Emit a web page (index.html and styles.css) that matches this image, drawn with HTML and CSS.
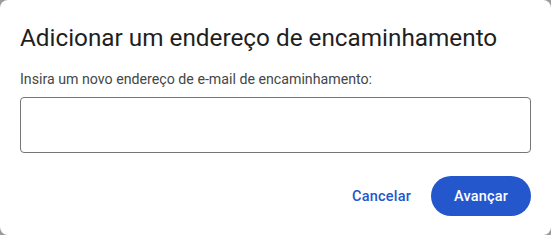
FILE: index.html
```html
<!DOCTYPE html>
<html lang="pt-BR">
<head>
    <meta charset="UTF-8">
    <meta name="viewport" content="width=device-width, initial-scale=1.0">
    <title>Adicionar um endereço de encaminhamento</title>
    <link rel="stylesheet" href="styles.css">
</head>
<body>
    <div class="dialog">
        <h1 class="dialog-title">Adicionar um endereço de encaminhamento</h1>
        <label class="field-label" for="forwardEmail">Insira um novo endereço de e-mail de encaminhamento:</label>
        <input type="text" id="forwardEmail" class="field-input">
        <div class="dialog-actions">
            <button class="btn-text">Cancelar</button>
            <button class="btn-filled">Avançar</button>
        </div>
    </div>
</body>
</html>
```

FILE: styles.css
```css
body {
    margin: 0;
    background-color: #9b9b9b;
    font-family: Roboto, Arial, sans-serif;
}

.dialog {
    box-sizing: border-box;
    width: 551px;
    height: 235px;
    background-color: white;
    border-radius: 8px;
    padding: 22px 20px 0 20px;
}

.dialog-title {
    margin: 0;
    font-size: 24.3px;
    font-weight: 400;
    color: #1f1f1f;
    line-height: 32px;
}

.field-label {
    display: block;
    margin-top: 15px;
    font-size: 14.2px;
    color: #444746;
    line-height: 20px;
}

.field-input {
    box-sizing: border-box;
    display: block;
    width: 100%;
    height: 56px;
    margin-top: 8px;
    border: 1px solid #747775;
    border-radius: 4px;
    font-size: 16px;
    padding: 0 12px;
}

.dialog-actions {
    display: flex;
    justify-content: flex-end;
    align-items: center;
    gap: 8px;
    margin-top: 23px;
}

button {
    font-family: Roboto, Arial, sans-serif;
    font-size: 14.5px;
    font-weight: 500;
    letter-spacing: 0.2px;
    border: none;
    height: 40px;
    border-radius: 20px;
    cursor: pointer;
}

.btn-text {
    background: none;
    color: #2456cc;
    padding: 0 12px;
}

.btn-filled {
    background-color: #2456cc;
    color: white;
    padding: 0;
    width: 100px;
}
```
